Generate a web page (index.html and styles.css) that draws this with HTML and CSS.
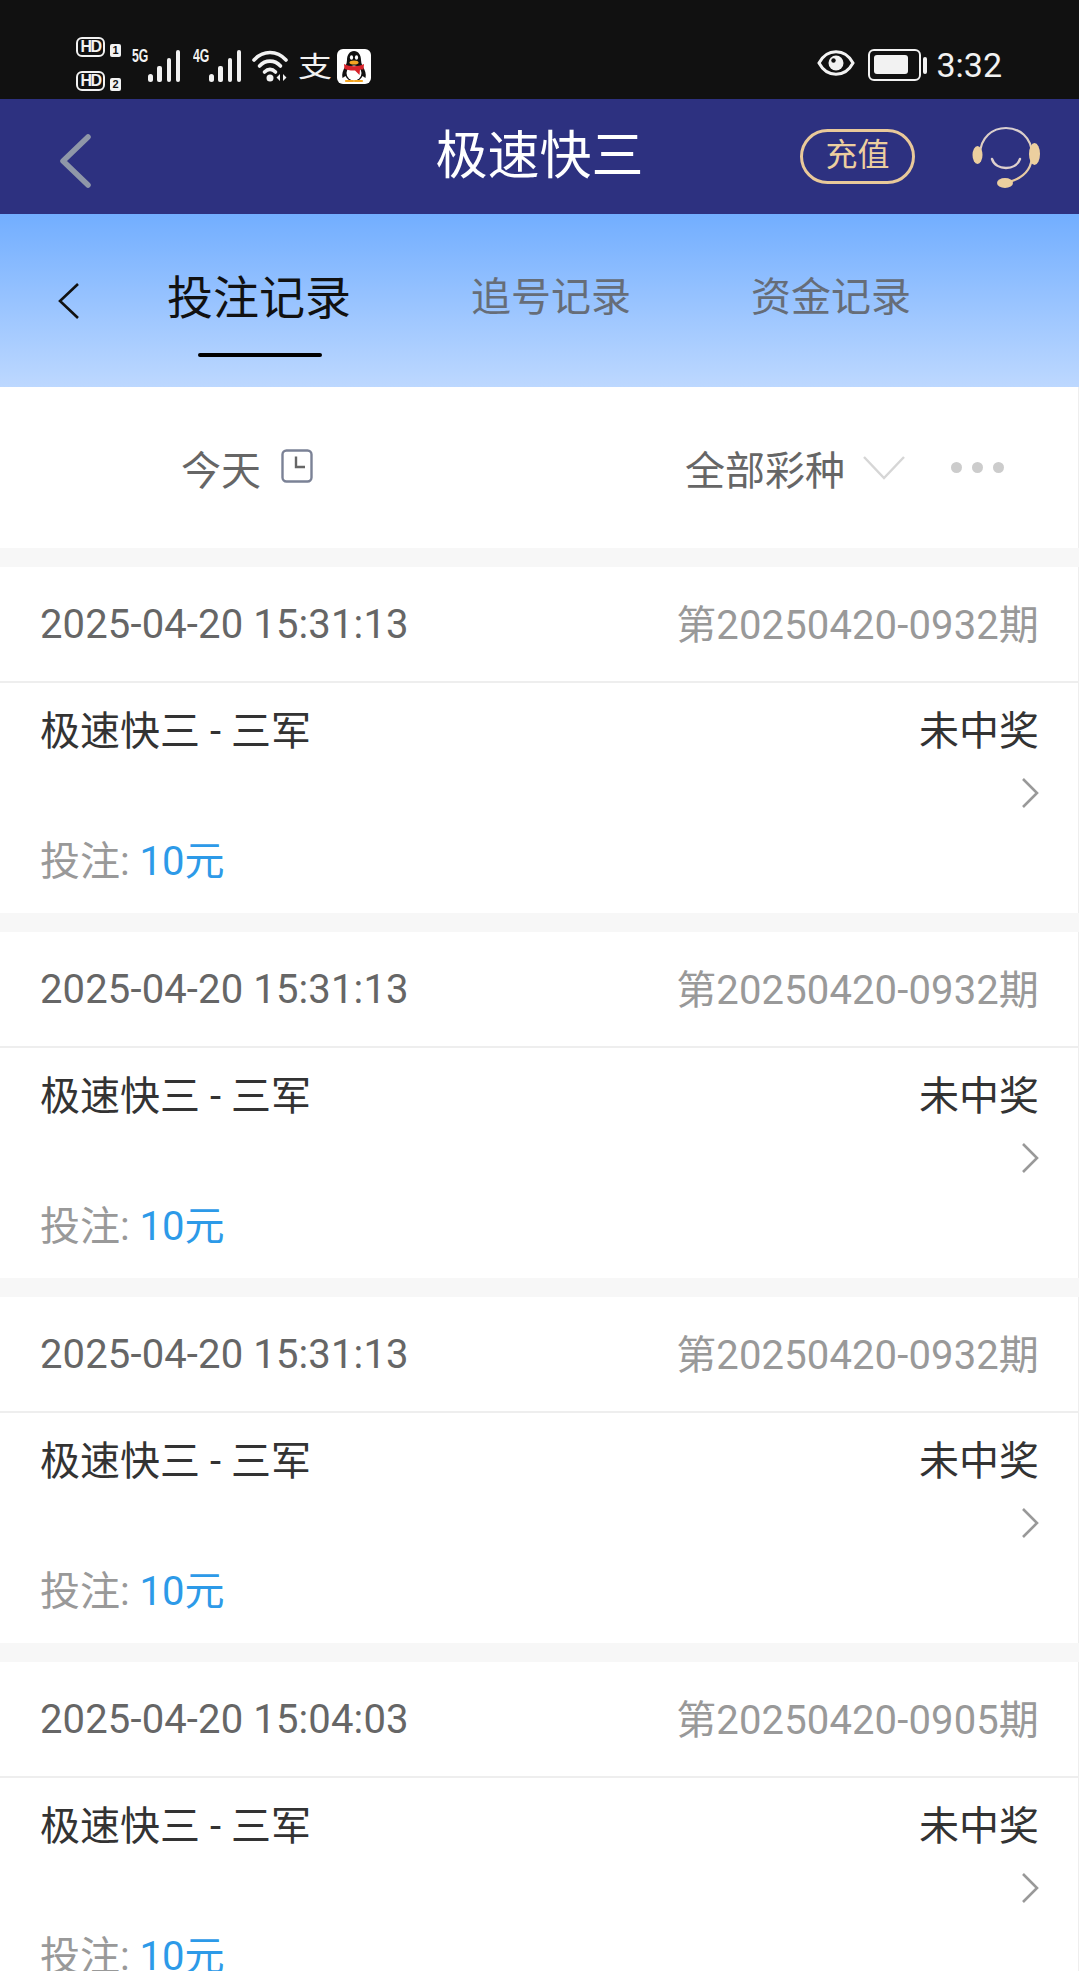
FILE: index.html
```html
<!DOCTYPE html>
<html>
<head lang="en">
    <meta charset="UTF-8">
    <title>极速快三</title>
    <link rel="stylesheet" href="styles.css">
</head>
<body>
<div class="status">
    <div class="status-left">
        <div class="hd-stack">
            <div class="hd-row"><span class="hd">HD</span><span class="sim">1</span></div>
            <div class="hd-row"><span class="hd">HD</span><span class="sim">2</span></div>
        </div>
        <div class="signal">
            <span class="net">5G</span>
            <svg class="bars" width="34" height="32" viewBox="0 0 34 32"><g fill="#f2f2f2"><rect x="0" y="24" width="5" height="8" rx="2.5"/><rect x="9" y="16" width="5" height="16" rx="2"/><rect x="19" y="8" width="4" height="24" rx="2"/><rect x="28" y="0" width="4" height="32" rx="2"/></g></svg>
        </div>
        <div class="signal">
            <span class="net">4G</span>
            <svg class="bars" width="34" height="32" viewBox="0 0 34 32"><g fill="#f2f2f2"><rect x="0" y="24" width="5" height="8" rx="2.5"/><rect x="9" y="16" width="5" height="16" rx="2"/><rect x="19" y="8" width="4" height="24" rx="2"/><rect x="28" y="0" width="4" height="32" rx="2"/></g></svg>
        </div>
        <svg class="wifi" width="38" height="33" viewBox="0 0 38 33">
            <g fill="none" stroke="#f2f2f2" stroke-width="3.6" stroke-linecap="round">
                <path d="M2 10C11 0 25 0 34 10"/>
                <path d="M7.500 16C13.500 9.500 22.500 9.500 28.500 16"/>
                <path d="M12.500 22C16 18.500 20 18.500 23.500 22"/>
            </g>
            <circle cx="18" cy="28" r="3.500" fill="#f2f2f2"/>
            <path d="M28 24l-3.500 3.500 3.500 3.500zM31 24l3.500 3.500-3.500 3.500z" fill="#f2f2f2"/>
        </svg>
        <span class="alipay">支</span>
        <svg class="qq" width="34" height="35" viewBox="0 0 34 35">
            <rect width="34" height="35" rx="6" fill="#fff"/>
            <path d="M17 2C12.500 2 10 6 10 11C10 13 9.500 15 8.500 17C6 21 4.500 25 5.500 29L8.500 27C9.500 29 11 30.500 12 31H22C23 30.500 24.500 29 25.500 27L28.500 29C29.500 25 28 21 25.500 17C24.500 15 24 13 24 11C24 6 21.500 2 17 2z" fill="#111"/>
            <ellipse cx="17" cy="24" rx="7.500" ry="7.500" fill="#fff"/>
            <path d="M7 15C13 18 21 18 27 15L26.500 20.500H23L22.500 26 18 21.500C14 21.800 10 21 7.500 20z" fill="#d8232a"/>
            <ellipse cx="17" cy="13.500" rx="4.500" ry="2" fill="#f5a623"/>
            <ellipse cx="14.500" cy="8.500" rx="1.600" ry="2.300" fill="#fff"/>
            <ellipse cx="19.500" cy="8.500" rx="1.600" ry="2.300" fill="#fff"/>
            <path d="M9 32h7M18 32h7" stroke="#f5a623" stroke-width="2.200" stroke-linecap="round"/>
        </svg>
    </div>
    <div class="status-right">
        <svg width="38" height="28" viewBox="0 0 38 28">
            <path d="M2 14C10 -1 28 -1 36 14 28 29 10 29 2 14z" fill="none" stroke="#f2f2f2" stroke-width="3"/>
            <circle cx="19" cy="14" r="7.500" fill="#f2f2f2"/>
            <circle cx="16.500" cy="11.500" r="2.200" fill="#111"/>
        </svg>
        <div class="battery"><div class="battery-fill"></div></div>
        <div class="battery-nub"></div>
        <span class="clock">3:32</span>
    </div>
</div>

<div class="nav">
    <svg class="nav-back" width="31" height="54" viewBox="0 0 31 54"><path d="M28 3L3 27 28 51" fill="none" stroke="#8f97a8" stroke-width="5.500" stroke-linecap="round" stroke-linejoin="round"/></svg>
    <div class="nav-title">极速快三</div>
    <div class="recharge">充值</div>
    <svg class="service" width="70" height="64" viewBox="0 0 70 64">
        <defs>
            <linearGradient id="gold" x1="0" y1="0" x2="0" y2="1">
                <stop offset="0" stop-color="#d9cfd0"/>
                <stop offset="1" stop-color="#e9c99a"/>
            </linearGradient>
        </defs>
        <path d="M9 30C9 -6 61 -6 61 30C61 44 52 53 38 57" fill="none" stroke="url(#gold)" stroke-width="2.200"/>
        <ellipse cx="6.500" cy="30" rx="5" ry="9" fill="#eccf9f"/>
        <ellipse cx="63.500" cy="29" rx="5.500" ry="11" fill="#eccf9f"/>
        <path d="M21 34C25 46 45 46 49 34" fill="none" stroke="#ded0cd" stroke-width="2.400" stroke-linecap="round"/>
        <ellipse cx="34" cy="58" rx="8" ry="5" fill="#eccf9f"/>
    </svg>
</div>

<div class="tabs">
    <svg class="tabs-back" width="22" height="36" viewBox="0 0 22 36"><path d="M20 1L2 18 20 35" fill="none" stroke="#111" stroke-width="2.600"/></svg>
    <div class="tab tab-on">投注记录</div>
    <div class="tab">追号记录</div>
    <div class="tab">资金记录</div>
</div>

<div class="filter">
    <div class="filter-day">
        <span>今天</span>
        <svg width="32" height="34" viewBox="0 0 32 34"><rect x="1.500" y="1.500" width="29" height="31" rx="4" fill="none" stroke="#7b8296" stroke-width="2.400"/><path d="M15 7.500V18H24" fill="none" stroke="#666" stroke-width="2.400"/></svg>
    </div>
    <div class="filter-kind">
        <span>全部彩种</span>
        <svg width="42" height="24" viewBox="0 0 42 24"><path d="M1 1L21 22 41 1" fill="none" stroke="#d6d6d6" stroke-width="2.400"/></svg>
    </div>
    <div class="dots"><i></i><i></i><i></i></div>
</div>

<div class="list">
    <div class="card">
        <div class="card-head"><span class="time">2025-04-20 15:31:13</span><span class="issue">第20250420-0932期</span></div>
        <div class="card-body">
            <div class="card-row"><span>极速快三 - 三军</span><span>未中奖</span></div>
            <svg class="arrow" width="18" height="30" viewBox="0 0 18 30"><path d="M2 1L16 15 2 29" fill="none" stroke="#999" stroke-width="2.600"/></svg>
            <div class="bet">投注: <span class="money">10元</span></div>
        </div>
    </div>
    <div class="card">
        <div class="card-head"><span class="time">2025-04-20 15:31:13</span><span class="issue">第20250420-0932期</span></div>
        <div class="card-body">
            <div class="card-row"><span>极速快三 - 三军</span><span>未中奖</span></div>
            <svg class="arrow" width="18" height="30" viewBox="0 0 18 30"><path d="M2 1L16 15 2 29" fill="none" stroke="#999" stroke-width="2.600"/></svg>
            <div class="bet">投注: <span class="money">10元</span></div>
        </div>
    </div>
    <div class="card">
        <div class="card-head"><span class="time">2025-04-20 15:31:13</span><span class="issue">第20250420-0932期</span></div>
        <div class="card-body">
            <div class="card-row"><span>极速快三 - 三军</span><span>未中奖</span></div>
            <svg class="arrow" width="18" height="30" viewBox="0 0 18 30"><path d="M2 1L16 15 2 29" fill="none" stroke="#999" stroke-width="2.600"/></svg>
            <div class="bet">投注: <span class="money">10元</span></div>
        </div>
    </div>
    <div class="card">
        <div class="card-head"><span class="time">2025-04-20 15:04:03</span><span class="issue">第20250420-0905期</span></div>
        <div class="card-body">
            <div class="card-row"><span>极速快三 - 三军</span><span>未中奖</span></div>
            <svg class="arrow" width="18" height="30" viewBox="0 0 18 30"><path d="M2 1L16 15 2 29" fill="none" stroke="#999" stroke-width="2.600"/></svg>
            <div class="bet">投注: <span class="money">10元</span></div>
        </div>
    </div>
</div>
</body>
</html>
```

FILE: styles.css
```css
*{
    padding: 0;
    margin: 0;
    box-sizing: border-box;
}
html,body{
    height: 100%;
    overflow: hidden;
}
body{
    font-family: Roboto, "Noto Sans CJK SC", sans-serif;
    background: #f7f7f7;
}

/* status bar */
.status{
    height: 99px;
    background: #111;
    display: flex;
    justify-content: space-between;
    padding: 37px 77px 0 76px;
    color: #f2f2f2;
}
.status-left{
    display: flex;
    align-items: flex-start;
}
.hd-stack{
    display: flex;
    flex-direction: column;
    gap: 14px;
}
.hd-row{
    display: flex;
    align-items: flex-end;
    gap: 5px;
}
.hd{
    width: 29px;
    height: 20px;
    border: 2.500px solid #f2f2f2;
    border-radius: 6px;
    font: 700 16px/15px "Liberation Sans", sans-serif;
    text-align: center;
    letter-spacing: -1.500px;
}
.sim{
    width: 11px;
    height: 13px;
    background: #f2f2f2;
    color: #111;
    border-radius: 2px;
    font: 700 11px/13px "Liberation Sans", sans-serif;
    text-align: center;
}
.signal{
    display: flex;
    margin: 13px 0 0 11px;
}
.signal + .signal{
    margin-left: 11px;
}
.net{
    font: 700 18px/14px "Liberation Sans", sans-serif;
    width: 17px;
    transform: scaleX(.68);
    transform-origin: left top;
    margin-top: -1px;
}
.bars{
    display: block;
    margin-left: -1px;
}
.wifi{
    margin: 13px 0 0 9px;
}
.alipay{
    font: 400 34px/34px "Noto Sans CJK SC", sans-serif;
    margin: 12px 0 0 8px;
    transform: scaleY(.82);
}
.qq{
    margin: 12px 0 0 5px;
}
.status-right{
    display: flex;
    align-items: flex-start;
    padding-top: 12px;
}
.battery{
    width: 53px;
    height: 32px;
    margin-left: 13px;
    border: 2px solid #f2f2f2;
    border-radius: 6px;
    padding: 4px 11px 5px 4px;
}
.battery-fill{
    height: 100%;
    background: #f2f2f2;
    border-radius: 3px;
}
.battery-nub{
    width: 4px;
    height: 17px;
    background: #f2f2f2;
    border-radius: 2px;
    margin: 8px 0 0 2px;
}
.clock{
    font-size: 34px;
    line-height: 32px;
    margin-left: 9px;
}

/* nav */
.nav{
    height: 115px;
    background: #2d3180;
    display: flex;
    align-items: center;
    padding: 0 38px 0 60px;
    position: relative;
}
.nav-title{
    position: absolute;
    left: 0;
    right: 0;
    text-align: center;
    color: #fff;
    font-size: 52px;
    line-height: 120px;
}
.nav-back{
    margin-right: auto;
    margin-top: 9px;
}
.recharge{
    width: 115px;
    height: 55px;
    border: 3px solid #e9c99a;
    border-radius: 28px;
    color: #eccf9f;
    font-size: 32px;
    line-height: 47px;
    text-align: center;
    margin-right: 56px;
    position: relative;
}
.service{
    position: relative;
}

/* tabs */
.tabs{
    height: 173px;
    background: linear-gradient(#72aeff, #bdd8ff);
    display: flex;
    align-items: flex-start;
    padding: 69px 0 0 58px;
}
.tabs-back{
    margin-right: 87px;
}
.tab{
    color: #666d78;
    font-size: 40px;
    line-height: 30px;
    margin-left: 120px;
}
.tab-on{
    color: #111;
    font-size: 46px;
    margin-left: 0;
    position: relative;
    height: 74px;
}
.tab-on::after{
    content: "";
    position: absolute;
    left: 31px;
    width: 124px;
    top: 70px;
    height: 4px;
    border-radius: 2px;
    background: #000;
}

/* filter row */
.filter{
    height: 161px;
    background: #fff;
    display: flex;
    align-items: center;
    padding: 0 74px 0 181px;
    color: #666;
    font-size: 40px;
    border-right: 1px solid #eee;
}
.filter-day,.filter-kind{
    display: flex;
    align-items: center;
}
.filter-day svg{
    margin: -4px 0 0 20px;
}
.filter-kind{
    margin-left: auto;
}
.filter-kind svg{
    margin: 0 0 0 18px;
}
.dots{
    display: flex;
    gap: 10px;
    margin: 0 0 0 46px;
}
.dots i{
    width: 11px;
    height: 11px;
    border-radius: 50%;
    background: #ccc;
}

/* list */
.list{
    padding-top: 19px;
    display: flex;
    flex-direction: column;
    gap: 19px;
}
.card{
    background: #fff;
    border-right: 1px solid #eee;
}
.card-head{
    height: 116px;
    border-bottom: 2px solid #eee;
    padding: 0 39px 0 40px;
    display: flex;
    justify-content: space-between;
    align-items: center;
    font-size: 40px;
    color: #666;
    letter-spacing: .13px;
}
.issue{
    color: #999;
    margin-top: -5px;
}
.card-body{
    height: 230px;
    padding: 25px 39px 0 40px;
    font-size: 40px;
    color: #333;
}
.card-row{
    display: flex;
    justify-content: space-between;
    line-height: 48px;
}
.arrow{
    display: block;
    margin: 22px 0 0 auto;
}
.bet{
    color: #999;
    line-height: 48px;
    margin-top: 30px;
}
.money{
    color: #2d9ae8;
}
```
